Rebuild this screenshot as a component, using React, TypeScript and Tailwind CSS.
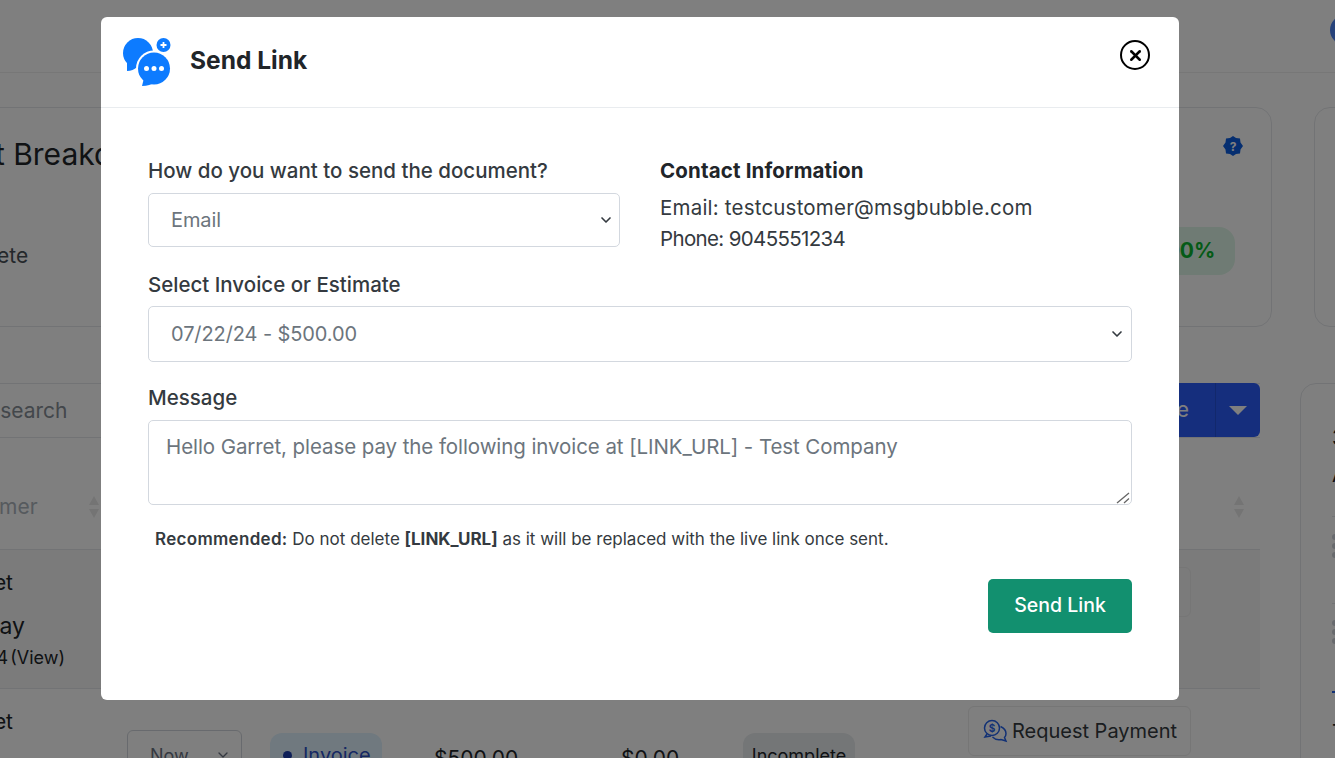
import { ChevronDown, X } from "lucide-react";

const fieldClass =
  "w-full h-full appearance-none rounded-[5px] border border-[#d3d8df] bg-white pl-[22px] pr-10 text-[20px] tracking-[-0.1px] text-[#6c757d] outline-none";

function ChatIcon() {
  return (
    <svg width="48" height="49" viewBox="0 0 48 49">
      <circle cx="15" cy="16" r="15" fill="#0d7bff" />
      <path d="M4 24 L4 34 Q10 34 14 30 Z" fill="#0d7bff" />
      <circle cx="31" cy="31.500" r="18" fill="#fff" />
      <circle cx="31" cy="31.500" r="16" fill="#0d7bff" />
      <path d="M21 41 L19 49 Q27 49 32 45 Z" fill="#0d7bff" />
      <circle cx="23.500" cy="31.500" r="2.500" fill="#fff" />
      <circle cx="31" cy="31.500" r="2.500" fill="#fff" />
      <circle cx="38.500" cy="31.500" r="2.500" fill="#fff" />
      <circle cx="40.500" cy="8" r="8.500" fill="#fff" />
      <circle cx="40.500" cy="8" r="7" fill="#0d7bff" />
      <path d="M37.500 8 H43.500 M40.500 5 V11" stroke="#fff" strokeWidth="1.800" />
    </svg>
  );
}

function RequestIcon() {
  return (
    <svg width="26" height="24" viewBox="0 0 26 24" fill="none" stroke="#2563eb" strokeWidth="1.500">
      <circle cx="10" cy="9" r="7.500" />
      <path d="M5 15 L3 18 L9 17" />
      <path d="M18.500 7.500 Q24 10 24 14.500 Q24 17 22.500 18.500 L24 22 L19 20.500 Q14 21.500 10.500 18" />
      <text x="10" y="13" textAnchor="middle" fontSize="10" fill="#2563eb" stroke="none" fontWeight="700">
        $
      </text>
    </svg>
  );
}

function SortArrows() {
  return (
    <svg width="12" height="24" viewBox="0 0 12 24" fill="#e8e8e8">
      <path d="M6 1 L11 10 H1 Z M6 23 L11 14 H1 Z" />
    </svg>
  );
}

function RequestButton() {
  return (
    <div className="flex h-[50px] w-[223px] items-center justify-center gap-[4px] rounded-md border border-[#ececec] text-[20px] text-[#343a40]">
      <RequestIcon />
      <span>Request Payment</span>
    </div>
  );
}

function TableRow({ first }: { first?: boolean }) {
  return (
    <div
      className={
        first
          ? "grid h-[139px] grid-cols-[267px_143px_164px_187px_122px_225px_292px] border-b border-[#e5e7eb] bg-[#f7f7f7]"
          : "grid h-[139px] grid-cols-[267px_143px_164px_187px_122px_225px_292px]"
      }
    >
      <div className="pt-[17px] text-[#212529]">
        <div className="w-[153px] text-right text-[21px] whitespace-nowrap">Test Garret</div>
        {first && (
          <>
            <div className="mt-[10px] w-[165px] text-right text-[23px] whitespace-nowrap">Pay Today</div>
            <div className="mt-[1px] w-[205px] text-right text-[18px] whitespace-nowrap [word-spacing:-3px]">
              07/22/24 (View)
            </div>
          </>
        )}
      </div>
      <div className="pt-[41px]">
        <div className="flex h-[50px] w-[115px] items-center justify-between rounded-md border border-gray-300 px-[22px] text-[18px] text-gray-500">
          Now
          <ChevronDown className="-mr-3 size-4" />
        </div>
      </div>
      <div className="pt-[44px]">
        <div className="flex h-[44px] w-[112px] items-center gap-[11px] rounded-xl bg-[#e0f2fe] pl-[13px] text-[20px] text-[#2b50c7]">
          <span className="size-[9px] rounded-full bg-[#1d3fb0]" />
          Invoice
        </div>
      </div>
      <div className="pt-[54px] text-[21px] text-[#212529]">$500.00</div>
      <div className="pt-[54px] text-[21px] text-[#212529]">$0.00</div>
      <div className="pt-[44px]">
        <div className="flex h-[44px] w-[112px] items-center justify-center rounded-xl bg-[#e9ecef] text-[18px] text-[#212529]">
          Incomplete
        </div>
      </div>
      <div className="pt-[17px]">
        <RequestButton />
      </div>
    </div>
  );
}

function Page() {
  return (
    <div className="h-[758px] w-[1335px] overflow-hidden bg-white">
      <div className="flex h-[73px] justify-end border-b border-[#efefef] pt-[15px]">
        <div className="-mr-[25px] size-[30px] rounded-full bg-[#4f86f7]" />
      </div>

      <div className="mt-[34px] -ml-[140px] flex gap-[42px]">
        <div className="flex h-[220px] w-[1412px] shrink-0 justify-between rounded-2xl border border-[#e5e7eb] pr-[36px]">
          <div className="pl-[20px] text-[#212529]">
            <div className="mt-[26px] text-[30px] leading-10 whitespace-nowrap">Payment Breakdown</div>
            <div className="mt-[66px] pl-[37px] text-[21px] text-[#495057]">Incomplete</div>
          </div>
          <div className="flex flex-col items-end">
            <svg className="mt-[28px] mr-[-8px]" width="20" height="20" viewBox="0 0 20 20">
              <path
                d="M10 0 L13 2 L17 2.500 L17.500 6.500 L20 10 L17.500 13.500 L17 17.500 L13 18 L10 20 L7 18 L3 17.500 L2.500 13.500 L0 10 L2.500 6.500 L3 2.500 L7 2 Z"
                fill="#0a5ce0"
              />
              <text x="10" y="14.500" textAnchor="middle" fontSize="12" fontWeight="700" fill="#fff">
                ?
              </text>
            </svg>
            <div className="mt-[71px] flex h-[48px] w-[90px] items-center justify-center rounded-2xl bg-[#dff7e8] pr-[9px] pl-[1px] text-[21px] font-bold text-[#08b52e]">
              100%
            </div>
          </div>
        </div>
        <div className="h-[220px] w-[200px] shrink-0 rounded-2xl border border-[#e5e7eb]" />
      </div>

      <div className="mt-[56px] -ml-[140px] flex gap-[40px]">
        <div className="w-[1400px] shrink-0">
          <div className="flex h-[55px] justify-between border-y border-[#e5e7eb]">
            <div className="flex items-center pl-[60px] text-[21px] text-[#868e96]">Type to search</div>
            <div className="-mt-px flex h-[54px] overflow-hidden rounded-r-md bg-[#2a5cfa] text-white">
              <div className="flex items-center pr-[26px] pl-[24px] text-[21px]">Create</div>
              <div className="flex w-[45px] items-center justify-center border-l border-[#2450d8]">
                <div className="size-0 border-x-[9px] border-t-[9px] border-x-transparent border-t-white" />
              </div>
            </div>
          </div>
          <div className="flex h-[112px] items-center justify-between border-b border-[#e5e7eb] pt-[27px] pr-[15px]">
            <div className="flex items-center gap-[50px] pl-[81px] text-[21px] text-[#adb5bd]">
              Customer
              <SortArrows />
            </div>
            <SortArrows />
          </div>
          <TableRow first />
          <TableRow />
        </div>
        <div className="h-[400px] w-[300px] shrink-0 rounded-2xl border border-[#e5e7eb] pt-[40px] pl-[31px] text-[#212529]">
          <div className="text-[21px] leading-7">3</div>
          <div className="mt-[9px] text-[21px] leading-7">Add</div>
          <div className="mt-[27px] border-t border-[#e5e7eb] pt-[17px]">
            <div className="size-[6px] rounded-sm bg-gray-300 shadow-[0_9px_0_#d1d5db,0_18px_0_#d1d5db]" />
          </div>
          <div className="mt-[63px] border-t border-[#e5e7eb] pt-[16px]">
            <div className="size-[6px] rounded-sm bg-gray-300 shadow-[0_9px_0_#d1d5db,0_18px_0_#d1d5db]" />
          </div>
          <div className="mt-[65px] h-[2px] w-[20px] bg-[#2563eb]" />
          <div className="mt-[26px] text-[21px] leading-7">Total</div>
        </div>
      </div>
    </div>
  );
}

function SendLinkModal() {
  return (
    <div className="absolute top-[17px] left-[101px] h-[683px] w-[1078px] rounded-[6px] bg-white text-[#343a40]">
      <div className="flex h-[91px] items-start justify-between border-b border-[#e9ecef] pt-[20px] pr-[29px] pl-[22px]">
        <div className="flex items-center gap-[19px]">
          <ChatIcon />
          <h1 className="-mt-[2px] text-[24.500px] font-bold text-[#212529]">Send Link</h1>
        </div>
        <div className="mt-[3px] flex size-[30px] items-center justify-center rounded-full border-[2.500px] border-black">
          <X className="size-[17px] text-black" strokeWidth={3.500} />
        </div>
      </div>

      <div className="px-[47px] pt-[48px]">
        <div className="flex">
          <div className="w-[472px]">
            <label className="block text-[20.500px] leading-[30px] font-medium">
              How do you want to send the document?
            </label>
            <div className="relative mt-[7px] h-[54px]">
              <select className={fieldClass} defaultValue="Email">
                <option>Email</option>
                <option>Text</option>
              </select>
              <ChevronDown className="absolute top-[19px] right-[6px] size-[16px] text-[#343a40]" strokeWidth={2.500} />
            </div>
          </div>
          <div className="ml-[40px] -mt-px text-[20.500px] leading-[31px]">
            <div className="font-bold tracking-[0.15px] text-[#212529]">Contact Information</div>
            <div className="mt-[6px] tracking-[0.2px]">Email: testcustomer@msgbubble.com</div>
            <div className="tracking-[-0.65px]">Phone: 9045551234</div>
          </div>
        </div>

        <label className="mt-[16px] block text-[20.500px] leading-[30px] font-medium">Select Invoice or Estimate</label>
        <div className="relative mt-[6px] h-[56px]">
          <select className={fieldClass} defaultValue="07/22/24 - $500.00">
            <option>07/22/24 - $500.00</option>
          </select>
          <ChevronDown className="absolute top-[20px] right-[7px] size-[16px] text-[#343a40]" strokeWidth={2.500} />
        </div>

        <label className="mt-[21px] block text-[20.500px] leading-[30px] font-medium">Message</label>
        <div className="relative mt-[7px]">
          <textarea
            className="block h-[85px] w-full resize-none rounded-[5px] border border-[#d3d8df] px-[17px] py-[10px] text-[20.500px] leading-[32px] tracking-[-0.08px] text-[#6c757d] outline-none"
            defaultValue="Hello Garret, please pay the following invoice at [LINK_URL] - Test Company"
          />
          <svg className="absolute right-[2px] bottom-[1px]" width="14" height="13" viewBox="0 0 14 13" stroke="#666" strokeWidth="1.300">
            <path d="M1 12 L13 2 M8 12 L13 7.500" />
          </svg>
        </div>

        <p className="mt-[21px] pl-[7px] text-[17px] leading-[26px] text-[#343a40]">
          <b className="font-semibold tracking-[0.3px]">Recommended:</b> Do not delete{" "}
          <b className="font-bold">[LINK_URL]</b> as it will be replaced with the live link once sent.
        </p>

        <div className="mt-[27px] flex justify-end">
          <button className="h-[54px] w-[144px] rounded-[5px] bg-[#12906f] text-[19.500px] font-medium text-white">
            Send Link
          </button>
        </div>
      </div>
    </div>
  );
}

export default function App() {
  return (
    <div className="relative h-[758px] w-[1335px] overflow-hidden font-['Inter',sans-serif]">
      <Page />
      <div className="absolute inset-0 bg-black/50" />
      <SendLinkModal />
    </div>
  );
}
